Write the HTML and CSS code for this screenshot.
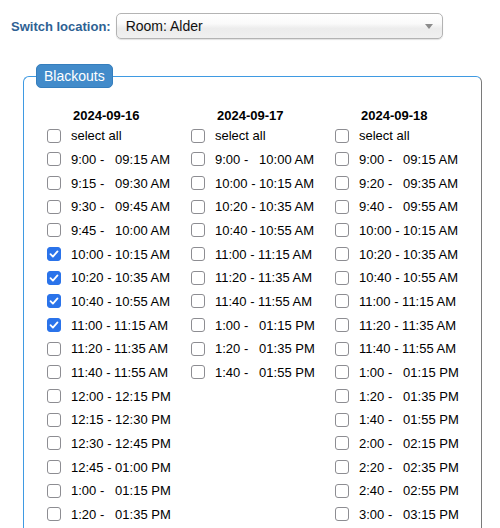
FILE: index.html
```html
<!DOCTYPE html>
<html lang="en">
<head>
    <meta charset="UTF-8">
    <title>Blackouts</title>
    <link rel="stylesheet" href="styles.css">
</head>
<body>
    <div class="location-bar">
        <label class="location-label" for="location">Switch location:</label>
        <div class="select-wrap">
            <select id="location" class="location-select">
                <option>Room: Alder</option>
            </select>
        </div>
    </div>

    <fieldset class="blackouts">
        <legend>Blackouts</legend>
        <div class="days">
            <div class="day">
                <div class="day-title">2024-09-16</div>
                <label class="slot"><input type="checkbox"><span>select all</span></label>
                <label class="slot"><input type="checkbox"><span>9:00 -   09:15 AM</span></label>
                <label class="slot"><input type="checkbox"><span>9:15 -   09:30 AM</span></label>
                <label class="slot"><input type="checkbox"><span>9:30 -   09:45 AM</span></label>
                <label class="slot"><input type="checkbox"><span>9:45 -   10:00 AM</span></label>
                <label class="slot"><input type="checkbox" checked><span>10:00 - 10:15 AM</span></label>
                <label class="slot"><input type="checkbox" checked><span>10:20 - 10:35 AM</span></label>
                <label class="slot"><input type="checkbox" checked><span>10:40 - 10:55 AM</span></label>
                <label class="slot"><input type="checkbox" checked><span>11:00 - 11:15 AM</span></label>
                <label class="slot"><input type="checkbox"><span>11:20 - 11:35 AM</span></label>
                <label class="slot"><input type="checkbox"><span>11:40 - 11:55 AM</span></label>
                <label class="slot"><input type="checkbox"><span>12:00 - 12:15 PM</span></label>
                <label class="slot"><input type="checkbox"><span>12:15 - 12:30 PM</span></label>
                <label class="slot"><input type="checkbox"><span>12:30 - 12:45 PM</span></label>
                <label class="slot"><input type="checkbox"><span>12:45 - 01:00 PM</span></label>
                <label class="slot"><input type="checkbox"><span>1:00 -   01:15 PM</span></label>
                <label class="slot"><input type="checkbox"><span>1:20 -   01:35 PM</span></label>
            </div>
            <div class="day">
                <div class="day-title">2024-09-17</div>
                <label class="slot"><input type="checkbox"><span>select all</span></label>
                <label class="slot"><input type="checkbox"><span>9:00 -   10:00 AM</span></label>
                <label class="slot"><input type="checkbox"><span>10:00 - 10:15 AM</span></label>
                <label class="slot"><input type="checkbox"><span>10:20 - 10:35 AM</span></label>
                <label class="slot"><input type="checkbox"><span>10:40 - 10:55 AM</span></label>
                <label class="slot"><input type="checkbox"><span>11:00 - 11:15 AM</span></label>
                <label class="slot"><input type="checkbox"><span>11:20 - 11:35 AM</span></label>
                <label class="slot"><input type="checkbox"><span>11:40 - 11:55 AM</span></label>
                <label class="slot"><input type="checkbox"><span>1:00 -   01:15 PM</span></label>
                <label class="slot"><input type="checkbox"><span>1:20 -   01:35 PM</span></label>
                <label class="slot"><input type="checkbox"><span>1:40 -   01:55 PM</span></label>
            </div>
            <div class="day">
                <div class="day-title">2024-09-18</div>
                <label class="slot"><input type="checkbox"><span>select all</span></label>
                <label class="slot"><input type="checkbox"><span>9:00 -   09:15 AM</span></label>
                <label class="slot"><input type="checkbox"><span>9:20 -   09:35 AM</span></label>
                <label class="slot"><input type="checkbox"><span>9:40 -   09:55 AM</span></label>
                <label class="slot"><input type="checkbox"><span>10:00 - 10:15 AM</span></label>
                <label class="slot"><input type="checkbox"><span>10:20 - 10:35 AM</span></label>
                <label class="slot"><input type="checkbox"><span>10:40 - 10:55 AM</span></label>
                <label class="slot"><input type="checkbox"><span>11:00 - 11:15 AM</span></label>
                <label class="slot"><input type="checkbox"><span>11:20 - 11:35 AM</span></label>
                <label class="slot"><input type="checkbox"><span>11:40 - 11:55 AM</span></label>
                <label class="slot"><input type="checkbox"><span>1:00 -   01:15 PM</span></label>
                <label class="slot"><input type="checkbox"><span>1:20 -   01:35 PM</span></label>
                <label class="slot"><input type="checkbox"><span>1:40 -   01:55 PM</span></label>
                <label class="slot"><input type="checkbox"><span>2:00 -   02:15 PM</span></label>
                <label class="slot"><input type="checkbox"><span>2:20 -   02:35 PM</span></label>
                <label class="slot"><input type="checkbox"><span>2:40 -   02:55 PM</span></label>
                <label class="slot"><input type="checkbox"><span>3:00 -   03:15 PM</span></label>
            </div>
        </div>
    </fieldset>
</body>
</html>
```

FILE: styles.css
```css
body {
    margin: 0;
    font-family: "Liberation Sans", Arial, sans-serif;
    font-size: 13px;
    color: #000;
    background: #fff;
}

.location-bar {
    display: flex;
    align-items: center;
    gap: 5px;
    padding: 13px 0 0 11px;
}

.location-label {
    font-weight: bold;
    color: #2e6193;
}

.select-wrap {
    position: relative;
}

.select-wrap::after {
    content: "";
    position: absolute;
    right: 10px;
    top: 11px;
    border-left: 4px solid transparent;
    border-right: 4px solid transparent;
    border-top: 5px solid #8c8c8c;
    pointer-events: none;
}

.location-select {
    -webkit-appearance: none;
    appearance: none;
    display: block;
    width: 327px;
    height: 26px;
    margin: 0;
    padding: 0 0 0 9px;
    border: 1px solid #b3b3b3;
    border-radius: 5px;
    background: linear-gradient(#ffffff 0%, #fafafa 40%, #ececec 60%, #f0f0f0 100%);
    box-shadow: 0 1px 1px rgba(0, 0, 0, 0.12);
    font-family: "Liberation Sans", Arial, sans-serif;
    font-size: 14px;
    color: #111;
}

.blackouts {
    box-sizing: border-box;
    width: 459px;
    margin: 25px 0 0 23px;
    padding: 19px 0 30px 12px;
    border: 1px solid;
    border-color: #3f9ae2 #7a7a7a #7a7a7a #3f9ae2;
    border-radius: 6px;
}

.blackouts legend {
    padding: 0 7px;
    margin: 0;
    height: 24px;
    box-sizing: border-box;
    line-height: 22px;
    font-size: 14px;
    color: #fff;
    background: #428bca;
    border: 1px solid #357ebd;
    border-radius: 5px;
}

.days {
    display: grid;
    grid-template-columns: repeat(3, 144px);
    margin-left: 11px;
}

.day-title {
    height: 17px;
    line-height: 17px;
    padding-left: 26px;
    font-weight: bold;
}

.slot {
    display: flex;
    align-items: center;
    height: 23.67px;
    white-space: pre;
}

.slot input {
    -webkit-appearance: none;
    appearance: none;
    width: 14px;
    height: 14px;
    margin: 0 10px 0 0;
    border: 1.5px solid #8d8d92;
    border-radius: 3px;
    background: #fff;
    box-sizing: border-box;
}

.slot input:checked {
    border-color: #2a73ea;
    background: #2a73ea url("data:image/svg+xml,%3Csvg xmlns='http://www.w3.org/2000/svg' viewBox='0 0 14 14'%3E%3Cpath d='M3.5 7.2l2.4 2.4 4.6-5.2' fill='none' stroke='white' stroke-width='1.8' stroke-linecap='round' stroke-linejoin='round'/%3E%3C/svg%3E") center / 14px 14px no-repeat;
}
```
